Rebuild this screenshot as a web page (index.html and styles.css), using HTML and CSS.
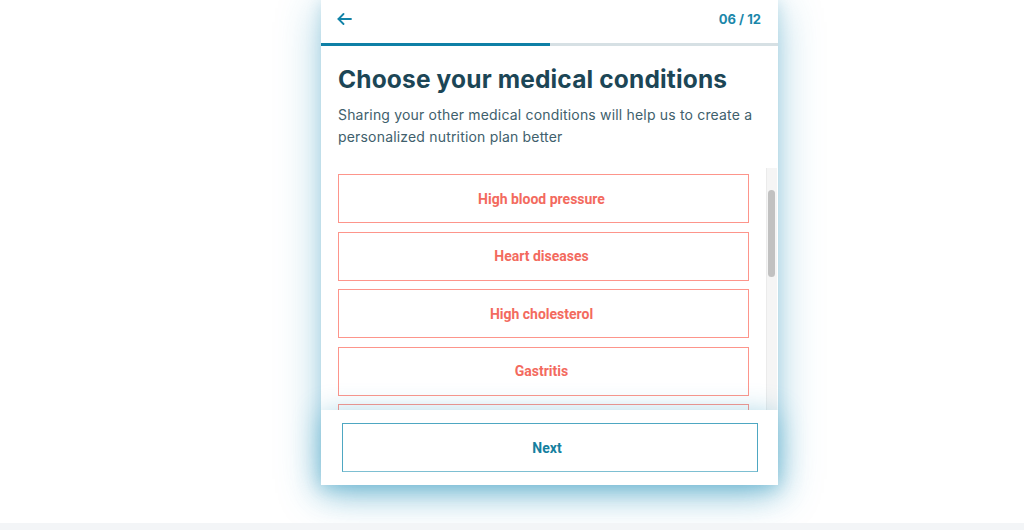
FILE: index.html
```html
<!DOCTYPE html>
<html lang="en">
<head>
<meta charset="utf-8">
<title>Choose your medical conditions</title>
<link rel="stylesheet" href="styles.css">
</head>
<body>
<div class="stage">
  <div class="card">
    <div class="topbar">
      <button class="back" aria-label="Back">
        <svg width="15" height="12" viewBox="0 0 15 12" fill="none" stroke="currentColor" stroke-width="1.8" stroke-linecap="round" stroke-linejoin="round"><path d="M14 6H1.5"/><path d="M6.5 1L1.5 6l5 5"/></svg>
      </button>
      <span class="step">06 / 12</span>
    </div>
    <div class="progress"><div class="progress-fill" style="width:50%"></div></div>
    <div class="intro">
      <h1 class="title">Choose your medical conditions</h1>
      <p class="subtitle">Sharing your other medical conditions will help us to create a personalized nutrition plan better</p>
    </div>
    <div class="scroll-area">
      <div class="options">
        <div class="option">High blood pressure</div>
        <div class="option">Heart diseases</div>
        <div class="option">High cholesterol</div>
        <div class="option">Gastritis</div>
        <div class="option"></div>
      </div>
      <div class="scrollbar"><div class="thumb"></div></div>
    </div>
    <div class="footer">
      <button class="next">Next</button>
    </div>
  </div>
</div>
<div class="strip"></div>
</body>
</html>
```

FILE: styles.css
```css
* { box-sizing: border-box; }
html, body { margin: 0; padding: 0; }
body {
  background: #ffffff;
  width: 1024px;
  height: 530px;
  overflow: hidden;
  font-family: "Inter", "Noto Sans", sans-serif;
}
.stage {
  height: 523px;
  padding-left: 321px;
}
.strip {
  height: 7px;
  background: #f3f5f7;
}
.card {
  width: 457px;
  height: 485px;
  background: #ffffff;
  display: flex;
  flex-direction: column;
  box-shadow: 0 8px 40px rgba(40, 145, 185, 0.42), 0 2px 14px rgba(40, 145, 185, 0.2);
}
.topbar {
  height: 43px;
  flex: none;
  display: flex;
  align-items: center;
  justify-content: space-between;
  padding: 0 17px 6px 16px;
}
.back {
  border: 0;
  background: none;
  padding: 0;
  color: #1283a8;
  display: flex;
  cursor: pointer;
}
.step {
  font-family: "Inter", sans-serif;
  font-weight: 700;
  font-size: 13px;
  color: #1b87aa;
}
.progress {
  height: 3px;
  flex: none;
  background: #d6e0e4;
}
.progress-fill {
  height: 100%;
  background: #0f80a6;
}
.intro {
  flex: none;
  padding: 17px 17px 0 17px;
}
.title {
  margin: 0;
  font-family: "Inter", sans-serif;
  font-weight: 700;
  font-size: 24.5px;
  line-height: 32px;
  letter-spacing: 0.15px;
  color: #1c4656;
}
.subtitle {
  margin: 9px 0 0 0;
  font-family: "Inter", sans-serif;
  font-size: 14px;
  line-height: 22px;
  letter-spacing: 0.18px;
  color: #40606c;
}
.scroll-area {
  flex: 1;
  min-height: 0;
  margin-top: 20px;
  display: flex;
  overflow: hidden;
}
.options {
  flex: 1;
  padding: 6px 17px 0 17px;
  display: flex;
  flex-direction: column;
  gap: 8.5px;
}
.option {
  flex: none;
  height: 49px;
  border: 1px solid #fd958b;
  display: flex;
  align-items: center;
  justify-content: center;
  padding-right: 4px;
  font-family: "Roboto", "Liberation Sans", sans-serif;
  font-weight: 700;
  font-size: 14px;
  color: #f36a5e;
}
.scrollbar {
  width: 11px;
  flex: none;
  margin-right: 1px;
  background: #f5f5f5;
  border-left: 1px solid #ebebeb;
  padding-top: 22px;
}
.thumb {
  width: 7px;
  height: 87px;
  margin-left: 1px;
  border-radius: 4px;
  background: #c1c1c1;
}
.footer {
  flex: none;
  height: 75px;
  position: relative;
  z-index: 1;
  background: #ffffff;
  padding: 13px 20px 13px 21px;
  box-shadow: 0 4px 28px rgba(40, 150, 190, 0.45);
}
.next {
  width: 100%;
  height: 49px;
  background: #ffffff;
  border: 1px solid #4ea7c2;
  border-bottom-color: #7dbfd2;
  padding: 0 6px 0 0;
  font-family: "Roboto", "Liberation Sans", sans-serif;
  font-weight: 700;
  font-size: 14px;
  color: #15809f;
  cursor: pointer;
}
```
